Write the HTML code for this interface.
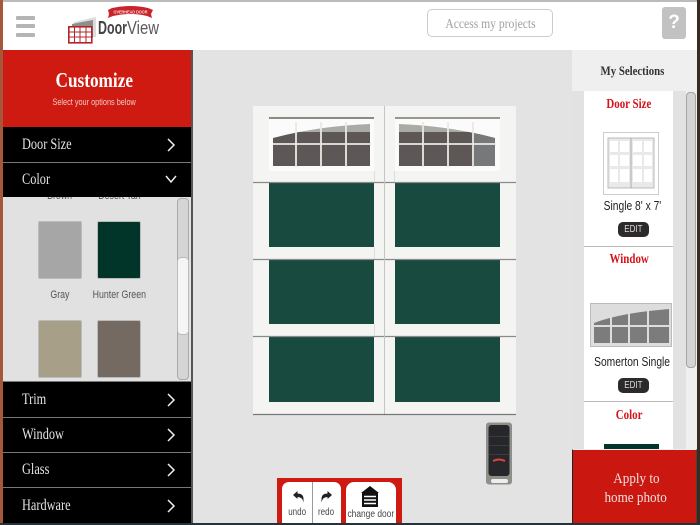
<!DOCTYPE html>
<html><head><meta charset="utf-8"><style>
*{box-sizing:border-box}
html,body{margin:0;padding:0;width:700px;height:525px;overflow:hidden;background:#fff}
body{position:relative;font-family:"Liberation Sans",sans-serif}
.a{position:absolute}
.slab{font-family:"Liberation Serif",serif}
.c{display:inline-block;white-space:nowrap}
.row{position:absolute;left:3px;width:188px;background:#000;color:#e4e4e4;font-family:"Liberation Serif",serif;font-size:16px;padding-left:19px;display:flex;align-items:center}
.row span{display:inline-block;transform:scaleX(.77);transform-origin:0 50%;white-space:nowrap}
.row svg{position:absolute;left:163px;top:50%;margin-top:-7px}
.sw{position:absolute;width:44px;height:58px;border-radius:2px;border:1px solid #bbb}
.lbl{position:absolute;font-size:11px;color:#555;text-align:center}
.lbl span{display:inline-block;transform:scaleX(.8);white-space:nowrap}
.edit{position:absolute;left:618px;width:31px;height:15px;background:#2c2a2a;border-radius:5px;color:#ddd;font-size:10px;line-height:15px;text-align:center}
.edit span{display:inline-block;transform:scaleX(.8)}
.ttl{position:absolute;left:584px;width:90px;text-align:center;color:#d3141a;font:bold 14px "Liberation Serif",serif}
.ttl span{display:inline-block;transform:scaleX(.78);white-space:nowrap}
.sel{position:absolute;left:584px;width:96px;text-align:center;font-size:13px;color:#222}
.sel span{display:inline-block;transform:scaleX(.79);white-space:nowrap}
.tb{position:absolute;text-align:center;font-size:10px;color:#444;white-space:nowrap}
.tb span{display:inline-block;transform:scaleX(.8)}
</style></head><body>
<div class="a" style="left:0;top:0;width:700px;height:2px;background:#bbb"></div>
<div class="a" style="left:0;top:0;width:3px;height:525px;background:#a5573a"></div>
<div class="a" style="left:697px;top:0;width:3px;height:525px;background:#3a2a22"></div>
<div class="a" style="left:0;top:523px;width:700px;height:2px;background:#26323a"></div>

<!-- header -->
<div class="a" style="left:16px;top:16px;width:19px;height:4px;background:#b5b5b5;border-radius:1px"></div>
<div class="a" style="left:16px;top:24px;width:19px;height:4px;background:#b5b5b5;border-radius:1px"></div>
<div class="a" style="left:16px;top:33px;width:19px;height:4px;background:#b5b5b5;border-radius:1px"></div>
<svg class="a" style="left:66px;top:5px" width="100" height="40" viewBox="0 0 100 40">
<path d="M8 17 L30 12 V32 H8Z" fill="#dcdcdc"/>
<path d="M6 19 L27 15 V33 H6Z" fill="#8e8e8e"/>
<rect x="2.800" y="21.800" width="23" height="16" fill="#fff" stroke="#b5232a" stroke-width="1.600"/>
<path d="M3 27H25M3 32H25M8.500 22V38M14 22V38M20 22V38" stroke="#b5232a" stroke-width="1" fill="none"/>
<path d="M42 5 L46 3 Q65 -1 82 3 L87 5 L85 9 L86 13 L81 11 Q65 7 47 11 L42 13 L43 9Z" fill="#c9242b"/>
<text x="64.500" y="8.500" font-size="4.800" font-weight="bold" fill="#f6d8d8" text-anchor="middle" font-family="Liberation Sans" textLength="34" lengthAdjust="spacingAndGlyphs">OVERHEAD DOOR</text>
<text x="32" y="29" font-size="18" fill="#444" font-family="Liberation Sans" font-weight="bold" textLength="29" lengthAdjust="spacingAndGlyphs">Door</text>
<text x="61" y="29" font-size="18" fill="#5a5a5a" font-family="Liberation Sans" textLength="32" lengthAdjust="spacingAndGlyphs">View</text>
</svg>
<div class="a slab" style="left:427px;top:9px;width:126px;height:28px;border:1px solid #ccc;border-radius:5px;color:#a0a0a0;font-size:13.500px;line-height:27px;text-align:center"><span class="c" style="transform:scaleX(.86)">Access my projects</span></div>
<div class="a" style="left:662px;top:7px;width:24px;height:32px;background:#c2c2c2;border-radius:3px;color:#fff;font:bold 19px/32px 'Liberation Sans',sans-serif;text-align:center">?</div>

<!-- centre -->
<div class="a" style="left:192px;top:50px;width:380px;height:473px;background:#e3e3e3"></div>
<div class="a" style="left:572px;top:50px;width:125px;height:473px;background:#e2e2e2"></div>

<!-- left panel -->
<div class="a" style="left:191px;top:50px;width:2px;height:473px;background:#555"></div>
<div class="a" style="left:3px;top:50px;width:188px;height:77px;background:#ce1a10;color:#fff;text-align:center;padding-right:5px">
<div class="slab" style="font-weight:bold;font-size:21px;margin-top:18px;line-height:24px"><span class="c" style="transform:scaleX(.82)">Customize</span></div>
<div style="font-size:9.500px;color:#f3c9c6;margin-top:5px;line-height:11px"><span class="c" style="transform:scaleX(.77)">Select your options below</span></div>
</div>
<div class="a" style="left:3px;top:127px;width:188px;height:396px;background:#777"></div>
<div class="row" style="top:127px;height:35px"><span>Door Size</span><svg width="10" height="14" viewBox="0 0 10 14"><path d="M2 1L8 7L2 13" fill="none" stroke="#eee" stroke-width="1.500"/></svg></div>
<div class="row" style="top:163px;height:34px"><span>Color</span><svg style="left:162px" width="14" height="14" viewBox="0 0 14 14"><path d="M1 3L6 9L11 3" fill="none" stroke="#eee" stroke-width="1.500"/></svg></div>
<div class="a" style="left:3px;top:197px;width:188px;height:184px;background:#e1e1e1;overflow:hidden">
<div class="lbl" style="left:27px;top:-7px;width:60px"><span>Brown</span></div>
<div class="lbl" style="left:81px;top:-7px;width:70px"><span>Desert Tan</span></div>
<div class="sw" style="left:35px;top:24px;background:#a6a6a6"></div>
<div class="sw" style="left:94px;top:24px;background:#02352a"></div>
<div class="lbl" style="left:27px;top:92px;width:60px"><span>Gray</span></div>
<div class="lbl" style="left:75px;top:92px;width:82px"><span>Hunter Green</span></div>
<div class="sw" style="left:35px;top:123px;background:#a89f89"></div>
<div class="sw" style="left:94px;top:123px;background:#756a61"></div>
<div class="a" style="left:174px;top:1px;width:12px;height:182px;background:#d5d5d5;border:1px solid #aaa;border-radius:4px"></div>
<div class="a" style="left:174px;top:60px;width:12px;height:78px;background:#f5f5f5;border:1px solid #bbb;border-radius:4px"></div>
</div>
<div class="row" style="top:382px;height:35px"><span>Trim</span><svg width="10" height="14" viewBox="0 0 10 14"><path d="M2 1L8 7L2 13" fill="none" stroke="#eee" stroke-width="1.500"/></svg></div>
<div class="row" style="top:418px;height:34px"><span>Window</span><svg width="10" height="14" viewBox="0 0 10 14"><path d="M2 1L8 7L2 13" fill="none" stroke="#eee" stroke-width="1.500"/></svg></div>
<div class="row" style="top:453px;height:34px"><span>Glass</span><svg width="10" height="14" viewBox="0 0 10 14"><path d="M2 1L8 7L2 13" fill="none" stroke="#eee" stroke-width="1.500"/></svg></div>
<div class="row" style="top:488px;height:35px"><span>Hardware</span><svg width="10" height="14" viewBox="0 0 10 14"><path d="M2 1L8 7L2 13" fill="none" stroke="#eee" stroke-width="1.500"/></svg></div>

<!-- door -->
<svg class="a" style="left:253px;top:106px" width="264" height="310" viewBox="253 106 264 310">
<defs>
<clipPath id="al"><path d="M273 138 Q318 126 370 124 V166 H273Z"/></clipPath>
<clipPath id="ar"><path d="M399 124 Q450 126 495 138 V166 H399Z"/></clipPath>
</defs>
<rect x="253" y="106" width="263" height="309" fill="#f4f4f3"/>
<rect x="269" y="183" width="105" height="64" fill="#184a40"/>
<rect x="395" y="183" width="105" height="64" fill="#184a40"/>
<rect x="269" y="260" width="105" height="64" fill="#184a40"/>
<rect x="395" y="260" width="105" height="64" fill="#184a40"/>
<rect x="269" y="337" width="105" height="65" fill="#184a40"/>
<rect x="395" y="337" width="105" height="65" fill="#184a40"/>
<rect x="269" y="117" width="105" height="2" fill="#8a8a86"/>
<rect x="395" y="117" width="105" height="2" fill="#9a968c"/>
<rect x="269" y="119" width="105" height="52" fill="#fbfbfb"/>
<rect x="395" y="119" width="105" height="52" fill="#fbfbfb"/>
<g clip-path="url(#al)">
<rect x="273" y="124" width="97" height="9" fill="#aaaaa6"/>
<rect x="273" y="132" width="97" height="34" fill="#5d5857"/>
</g>
<g clip-path="url(#ar)">
<rect x="399" y="124" width="96" height="9" fill="#aaaaa6"/>
<rect x="399" y="132" width="96" height="34" fill="#5d5857"/>
<rect x="474" y="132" width="21" height="34" fill="#77787a"/>
</g>
<path d="M296 122V167M321 122V167M346 122V167M273 144H371" stroke="#ece9e3" stroke-width="1.800" fill="none"/>
<path d="M423 122V167M448 122V167M473 122V167M398 144H496" stroke="#ece9e3" stroke-width="1.800" fill="none"/>
<path d="M253 182.500H516M253 259.500H516M253 336.500H516" stroke="#8a8a8a" stroke-width="1.200"/>
<path d="M384.500 106V415" stroke="#c4c4c4" stroke-width="1"/>
<path d="M374.500 171V182M374.500 247V259M374.500 324V336M394.500 171V182" stroke="#ddd" stroke-width="1"/>
<path d="M253 414.500H516" stroke="#777" stroke-width="1.200"/>
</svg>

<!-- remote -->
<svg class="a" style="left:484px;top:421px" width="30" height="66" viewBox="0 0 30 66">
<rect x="2" y="1.500" width="26" height="62" rx="3" fill="#8f8f89"/>
<rect x="4.500" y="4" width="21" height="51" rx="3" fill="#26272a"/>
<path d="M5 15.500H25M5 24.500H25M5 33.500H25" stroke="#3c3c40" stroke-width="1"/>
<path d="M9 40Q15 37 21 40" stroke="#e0453a" stroke-width="2" fill="none"/>
<rect x="7" y="58" width="17" height="4" rx="2" fill="#eee"/>
</svg>

<!-- toolbar -->
<div class="a" style="left:277px;top:478px;width:125px;height:45px;background:#ce1a10"></div>
<div class="a" style="left:282px;top:482px;width:59px;height:41px;background:#fff;border-radius:7px 7px 0 0"></div>
<div class="a" style="left:312px;top:482px;width:1px;height:41px;background:#999"></div>
<div class="a" style="left:346px;top:482px;width:50px;height:41px;background:#fff;border-radius:8px 8px 0 0"></div>
<svg class="a" style="left:293px;top:491px" width="11" height="12" viewBox="0 0 11 12"><path d="M0 4L4.500 0V2.500Q10.500 2.500 10.500 8V11.500Q9.500 6 4.500 6V8Z" fill="#222"/></svg>
<svg class="a" style="left:321px;top:491px" width="11" height="12" viewBox="0 0 11 12"><path d="M11 4L6.500 0V2.500Q.5 2.500 .5 8V11.500Q1.500 6 6.500 6V8Z" fill="#222"/></svg>
<svg class="a" style="left:361px;top:486px" width="18" height="21" viewBox="0 0 18 21"><path d="M9 0L18 7H0Z" fill="#111"/><rect x="1" y="7" width="16" height="14" fill="#111"/><path d="M3 10.500H15M3 14H15M3 17.500H15" stroke="#fff" stroke-width="1.500"/></svg>
<div class="tb" style="left:282px;top:507px;width:31px"><span>undo</span></div>
<div class="tb" style="left:311px;top:507px;width:30px"><span>redo</span></div>
<div class="tb" style="left:346px;top:509px;width:50px"><span style="transform:scaleX(.84);margin:0 -10px">change door</span></div>

<!-- right panel -->
<div class="a slab" style="left:572px;top:50px;width:121px;height:41px;color:#333;font-weight:bold;font-size:13px;line-height:42px;text-align:center;z-index:2"><span class="c" style="transform:scaleX(.83)">My Selections</span></div>
<div class="a" style="left:572px;top:50px;width:125px;height:41px;background:#efefef"></div>
<div class="a" style="left:584px;top:91px;width:89px;height:360px;background:#fff"></div>
<div class="a" style="left:673px;top:91px;width:24px;height:360px;background:#e2e2e2"></div>
<div class="a" style="left:686px;top:91px;width:11px;height:360px;background:#efefef"></div>
<div class="a" style="left:686px;top:92px;width:10px;height:276px;background:#d4d4d4;border:1px solid #a5a5a5;border-radius:4px"></div>
<div class="ttl" style="top:97px"><span>Door Size</span></div>
<svg class="a" style="left:603px;top:132px" width="57" height="64" viewBox="0 0 57 64">
<rect x=".5" y=".5" width="55" height="62" fill="#fff" stroke="#ccc"/>
<rect x="5" y="6" width="46" height="50" fill="#e9e9e9" stroke="#bbb"/>
<path d="M28 6V56" stroke="#aaa"/>
<path d="M7 9h8v11h-8zM17 9h9v11h-9zM30 9h9v11h-9zM41 9h8v11h-8zM7 23h8v11h-8zM17 23h9v11h-9zM30 23h9v11h-9zM41 23h8v11h-8zM7 37h8v13h-8zM17 37h9v13h-9zM30 37h9v13h-9zM41 37h8v13h-8z" fill="#fff"/>
</svg>
<div class="sel" style="top:198px"><span>Single 8' x 7'</span></div>
<div class="edit" style="top:222px"><span>EDIT</span></div>
<div class="a" style="left:584px;top:246px;width:89px;height:1px;background:#bbb"></div>
<div class="ttl" style="top:252px"><span>Window</span></div>
<svg class="a" style="left:590px;top:303px" width="83" height="44" viewBox="0 0 83 44">
<rect x=".5" y=".5" width="81" height="43" fill="#ddd" stroke="#bbb"/>
<path d="M4 20Q30 10 79 6V22H4Z" fill="#7c7c7c"/>
<rect x="4" y="24" width="75" height="16" fill="#7c7c7c"/>
<path d="M21 4V42M39 4V42M58 4V42M3 23H80" stroke="#ddd" stroke-width="2"/>
</svg>
<div class="sel" style="top:354px"><span>Somerton Single</span></div>
<div class="edit" style="top:378px"><span>EDIT</span></div>
<div class="a" style="left:584px;top:401px;width:89px;height:1px;background:#bbb"></div>
<div class="ttl" style="top:408px"><span>Color</span></div>
<div class="a" style="left:604px;top:444px;width:55px;height:6px;background:#02352a"></div>
<div class="a slab" style="left:572px;top:449px;width:125px;height:74px;background:#ca1810;border-left:1px solid #222;border-right:1px solid #444;border-top:1px solid #eee;color:#f0e0de;font-size:15px;line-height:19px;text-align:center;padding-top:20px;padding-left:3px"><span class="c" style="transform:scaleX(.875)">Apply to</span><br><span class="c" style="transform:scaleX(.875)">home photo</span></div>
</body></html>
